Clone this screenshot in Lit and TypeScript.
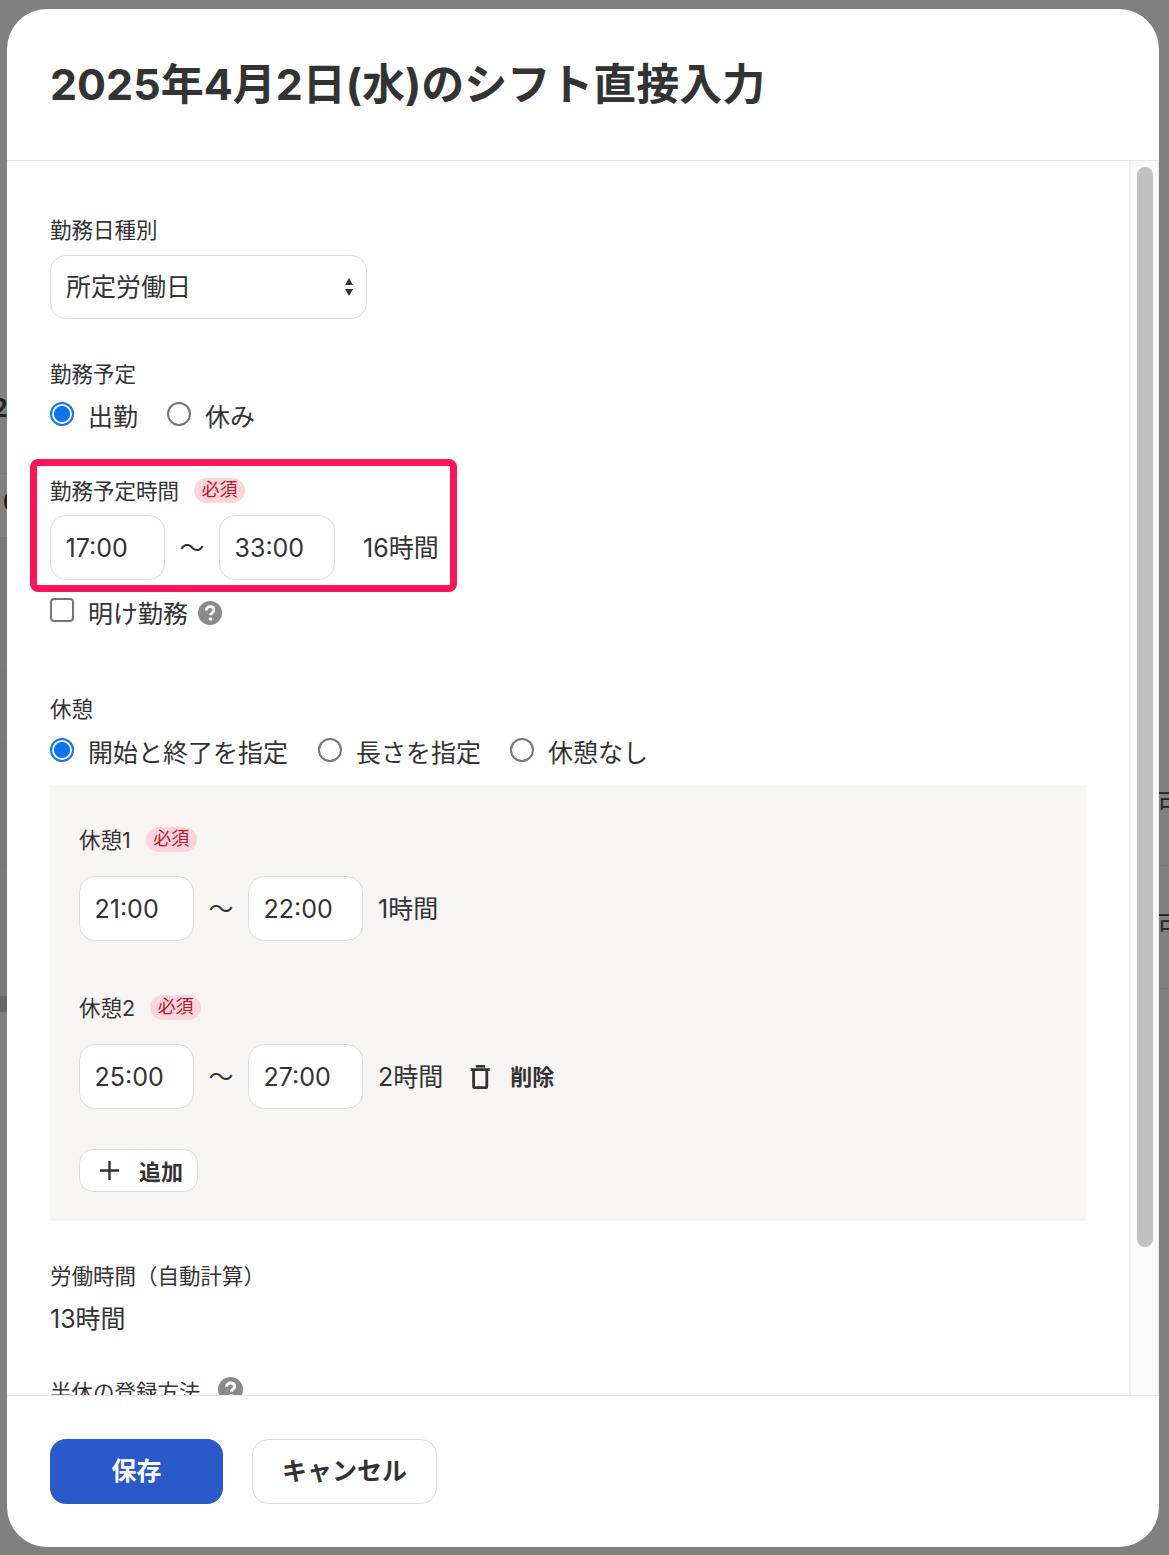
import { LitElement, html, css, svg } from "lit";
import { customElement } from "lit/decorators.js";

const help = html`<svg class="help" viewBox="0 0 24 24" aria-hidden="true"><circle cx="12" cy="12" r="12" fill="#8a8a8a"/><path d="M8.2 9.4c0-2.3 1.7-3.7 3.9-3.7s3.8 1.3 3.8 3.3c0 1.5-.8 2.3-1.9 3.1-1 .7-1.4 1.1-1.4 2.2" fill="none" stroke="#fff" stroke-width="2.8"/><circle cx="12.5" cy="18" r="1.8" fill="#fff"/></svg>`;

const trash = svg`<path d="M6.7 1.3H16" fill="none" stroke="#333" stroke-width="2.6"/><path d="M1.7 4.6h19" fill="none" stroke="#333" stroke-width="2.8"/><path d="M4.6 4.6v17.2q0 .8.8.8h11.6q.8 0 .8-.8V4.6" fill="none" stroke="#333" stroke-width="2.8"/>`;

@customElement("app-root")
export class AppRoot extends LitElement {
  static styles = css`
    :host { display: block; position: relative; width: 1169px; height: 1555px; overflow: hidden; background: #808080; font-family: Inter, "Noto Sans CJK JP", sans-serif; color: #333; }
    * { box-sizing: border-box; }
    .bg { position: absolute; }
    .line-l { left: 0; width: 7px; height: 1px; background: #777; }
    .l1 { top: 473px; } .l2 { top: 537px; } .l3 { top: 670px; } .l4 { top: 743px; } .l5 { top: 865px; }
    .band { left: 0; top: 996px; width: 7px; height: 16px; background: #666; }
    .shade { left: 0; top: 538px; width: 7px; height: 458px; background: #7b7a79; }
    .line-r { left: 1159px; width: 10px; height: 1px; background: #777; }
    .r1 { top: 865px; } .r2 { top: 988px; }
    .frag { font-size: 25px; line-height: 30px; color: #222; font-weight: 700; }
    .f1 { left: -8px; top: 393px; } .f2 { left: 3px; top: 487px; }
    .f3 { left: 1157px; top: 788px; font-weight: 400; } .f4 { left: 1157px; top: 910px; font-weight: 400; }

    .modal { position: absolute; left: 7px; top: 9px; width: 1152px; height: 1538px; background: #fff; border-radius: 40px; overflow: hidden; display: flex; flex-direction: column; }
    .head { height: 152px; flex: none; border-bottom: 1.5px solid #e8e8e8; padding: 45px 43px 0; }
    h1 { margin: 0; font-size: 43px; line-height: 60px; font-weight: 700; letter-spacing: 0; color: #333; }
    .middle { flex: 1; min-height: 0; display: flex; }
    .content { flex: 1; min-width: 0; overflow: hidden; padding: 55px 43px 0; display: flex; flex-direction: column; align-items: flex-start; }
    .content > * { flex: none; }
    .track { width: 30px; flex: none; background: #fafafa; border-left: 2px solid #eeeeee; border-right: 1px solid #eeeeee; padding: 6px 0 0 6px; }
    .thumb { width: 16px; height: 1080px; border-radius: 8px; background: #c1c1c1; }
    .foot { height: 152px; flex: none; border-top: 1.5px solid #e8e8e8; padding: 43px 43px 0; display: flex; gap: 29px; align-items: flex-start; }

    .label { font-size: 21.5px; line-height: 30px; height: 30px; display: flex; align-items: center; white-space: nowrap; }
    .label.up { padding-bottom: 2px; }
    .field { border: 1.5px solid #dcdcdc; border-radius: 16px; background: #fff; font-size: 25px; display: flex; align-items: center; flex: none; white-space: nowrap; }
    .select { width: 317px; height: 64px; margin-top: 9px; padding: 0 13px 4px 15px; justify-content: space-between; }
    .select svg { width: 8px; height: 18px; margin-bottom: -4px; }
    .sched { margin-top: 41px; }
    .radios { display: flex; align-items: center; height: 34px; margin-top: 8px; font-size: 25px; white-space: nowrap; }
    .radios.breaks { margin-top: 10px; }
    .radios.breaks .radio-item:first-child { margin-right: 30px; }
    .radio-item { display: flex; align-items: center; margin-right: 29px; }
    .radio { width: 24px; height: 24px; border-radius: 50%; border: 2px solid #767676; background: #fff; margin-right: 14px; margin-top: -3px; flex: none; }
    .radio.on { border: 2.5px solid #0a75f5; background: radial-gradient(circle, #0a75f5 0 7.5px, #fff 8.5px); }
    .highlight { width: 427px; height: 133px; border: 7px solid #ff1459; border-radius: 8px; margin: 27px 0 0 -20px; padding: 10px 0 0 13px; }
    .tag { margin-left: 15px; height: 25px; width: 51px; border-radius: 13px; background: #fbd5da; color: #b8142d; font-size: 18px; display: inline-flex; align-items: center; justify-content: center; margin-top: -2px; }
    .times { display: flex; align-items: center; font-size: 25px; white-space: nowrap; }
    .time { width: 115px; height: 65px; padding-left: 14.5px; }
    .time.wide { width: 116px; }
    .tilde { width: 54px; flex: none; text-align: center; font-size: 25px; padding-bottom: 4px; }
    .highlight .times { margin-top: 9px; }
    .dur { margin-left: 28px; padding-bottom: 3px; }
    .check-row { display: flex; align-items: center; height: 32px; margin-top: 4px; font-size: 25px; white-space: nowrap; }
    .check { width: 24px; height: 24px; border: 2px solid #767676; border-radius: 4px; margin-right: 14px; margin-top: -4px; flex: none; }
    .help { width: 24px; height: 24px; flex: none; margin-left: 10px; margin-top: 1px; }
    .break-label { margin-top: 66px; }
    .panel { width: 1036px; height: 436px; background: #f6f5f4; margin-top: 17px; padding: 40px 29px 0; display: flex; flex-direction: column; align-items: flex-start; }
    .panel .times { margin-top: 21px; }
    .panel .dur { margin-left: 15px; }
    .panel .second { margin-top: 52px; }
    .trash { display: flex; align-items: center; font-size: 22px; font-weight: 700; margin-left: 26px; }
    .trash svg { width: 22px; height: 24px; margin-right: 19px; }
    .trash span { padding-bottom: 4px; }
    .add { width: 119px; height: 43px; margin-top: 40px; border: 1.5px solid #dcdcdc; border-radius: 14px; background: #fff; display: flex; align-items: center; font-size: 22px; font-weight: 700; padding-left: 19px; flex: none; }
    .add svg { width: 21px; height: 21px; margin-right: 19px; }
    .add span { padding-bottom: 2px; }
    .total { margin-top: 40px; }
    .value { font-size: 25px; line-height: 34px; margin-top: 11px; }
    .half { margin-top: 41px; }
    .half .help { margin-left: 17px; width: 25px; height: 25px; margin-top: -5px; }
    .btn { height: 65px; border-radius: 16px; font-size: 25px; font-weight: 700; display: flex; align-items: center; justify-content: center; padding-bottom: 5px; }
    .save { width: 173px; background: #2a59c9; color: #fff; }
    .cancel { width: 185px; background: #fff; border: 1.5px solid #dcdcdc; color: #333; }
  `;

  private timeRow(a: string, b: string, d: string, extra: unknown = null, wide = false) {
    return html`<div class="times">
      <div class="field time">${a}</div><div class="tilde">〜</div><div class="field time ${wide ? "wide" : ""}">${b}</div>
      <div class="dur">${d}</div>${extra}
    </div>`;
  }

  render() {
    return html`
      <div class="bg shade"></div>
      <div class="bg line-l l1"></div><div class="bg line-l l2"></div><div class="bg line-l l3"></div><div class="bg line-l l4"></div><div class="bg line-l l5"></div>
      <div class="bg band"></div>
      <div class="bg line-r r1"></div><div class="bg line-r r2"></div>
      <div class="bg frag f1">2</div><div class="bg frag f2">0</div>
      <div class="bg frag f3">可</div><div class="bg frag f4">可</div>
      <div class="modal">
        <div class="head"><h1>2025年4月2日(水)のシフト直接入力</h1></div>
        <div class="middle">
          <div class="content">
            <div class="label up">勤務日種別</div>
            <div class="field select">所定労働日
              <svg viewBox="0 0 8 18"><path d="M4 0 8 7H0zM4 18 0 11h8z" fill="#333"/></svg>
            </div>
            <div class="label up sched">勤務予定</div>
            <div class="radios">
              <div class="radio-item"><span class="radio on"></span>出勤</div>
              <div class="radio-item"><span class="radio"></span>休み</div>
            </div>
            <div class="highlight">
              <div class="label">勤務予定時間<span class="tag">必須</span></div>
              ${this.timeRow("17:00", "33:00", "16時間", null, true)}
            </div>
            <div class="check-row"><span class="check"></span>明け勤務${help}</div>
            <div class="label break-label">休憩</div>
            <div class="radios breaks">
              <div class="radio-item"><span class="radio on"></span>開始と終了を指定</div>
              <div class="radio-item"><span class="radio"></span>長さを指定</div>
              <div class="radio-item"><span class="radio"></span>休憩なし</div>
            </div>
            <div class="panel">
              <div class="label">休憩1<span class="tag">必須</span></div>
              ${this.timeRow("21:00", "22:00", "1時間")}
              <div class="label second">休憩2<span class="tag">必須</span></div>
              ${this.timeRow("25:00", "27:00", "2時間", html`<div class="trash"><svg viewBox="0 0 22 24">${trash}</svg><span>削除</span></div>`)}
              <div class="add"><svg viewBox="0 0 21 21"><path d="M10.5 1v19M1 10.5h19" stroke="#333" stroke-width="2.4" fill="none"/></svg><span>追加</span></div>
            </div>
            <div class="label total">労働時間（自動計算）</div>
            <div class="value">13時間</div>
            <div class="label half">半休の登録方法${help}</div>
          </div>
          <div class="track"><div class="thumb"></div></div>
        </div>
        <div class="foot">
          <div class="btn save">保存</div>
          <div class="btn cancel">キャンセル</div>
        </div>
      </div>
    `;
  }
}
